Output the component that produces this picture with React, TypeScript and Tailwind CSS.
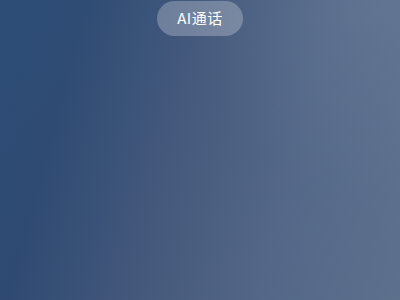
export default function App() {
  return (
    <div className="relative h-[300px] w-[400px] overflow-hidden bg-[linear-gradient(105deg,#2d4d76_0%,#2f4c74_18%,#465b7e_45%,#566a8a_70%,#607591_100%)]">
      <div className="absolute inset-0 bg-[radial-gradient(circle_at_95%_0%,rgba(120,135,160,0.25)_0%,rgba(120,135,160,0)_40%)]" />
      <div className="absolute inset-0 bg-[linear-gradient(180deg,rgba(40,40,80,0)_0%,rgba(40,40,80,0.06)_100%)]" />
      <div className="relative flex justify-center pt-px">
        <div className="flex h-[35px] w-[86px] items-center justify-center rounded-full bg-white/25 font-['Noto_Sans_CJK_SC',sans-serif] text-[15px] tracking-[0.5px] text-white">
          AI通话
        </div>
      </div>
    </div>
  );
}
